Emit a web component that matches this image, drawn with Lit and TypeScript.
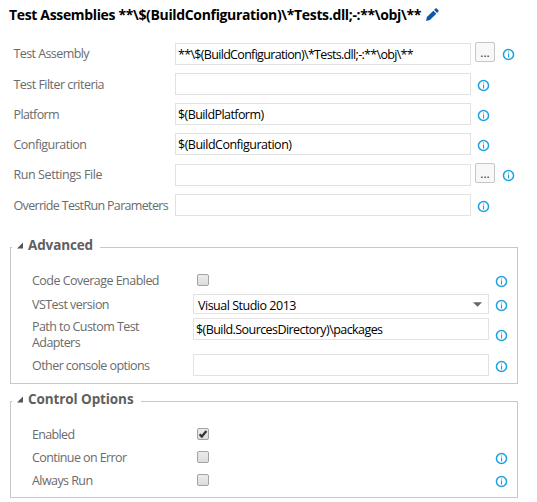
import { LitElement, html, css, svg, nothing } from "lit";
import { customElement, property } from "lit/decorators.js";

/** A single line of text, tracked so that it fills the given measure. */
@customElement("tracked-text")
class TrackedText extends LitElement {
  static styles = css`
    :host { display: block; white-space: pre; height: 16px; }
    span { display: inline-block; }
  `;
  @property() text = "";
  @property({ type: Number }) measure = 0;

  render() {
    return html`<span>${this.text}</span>`;
  }

  updated() {
    const span = this.renderRoot.querySelector("span") as HTMLElement;
    span.style.letterSpacing = "0px";
    const natural = span.getBoundingClientRect().width;
    span.style.letterSpacing = `${(this.measure - natural) / this.text.length}px`;
  }
}

@customElement("info-icon")
class InfoIcon extends LitElement {
  static styles = css`
    :host { display: block; width: 13px; height: 13px; }
    svg { display: block; }
  `;
  render() {
    return html`<svg width="13" height="13" viewBox="0 0 13 13">
      <circle cx="6.5" cy="6.5" r="5.05" fill="none" stroke="#1ba1e2" stroke-width="1.5" />
      <rect x="6" y="3.5" width="1" height="1" fill="#1ba1e2" />
      <rect x="6" y="5.5" width="1.1" height="4" fill="#1ba1e2" />
    </svg>`;
  }
}

type Line = [text: string, measure: number];

interface Field {
  label: Line[];
  kind: "text" | "select" | "check";
  value?: Line;
  checked?: boolean;
  browse?: boolean;
  info?: boolean;
  size?: string;
}

const main: Field[] = [
  { label: [["Test Assembly", 75.5]], kind: "text", value: ["**\\$(BuildConfiguration)\\*Tests.dll;-:**\\obj\\**", 235], browse: true, info: true },
  { label: [["Test Filter criteria", 90.5]], kind: "text", info: true },
  { label: [["Platform", 45.5]], kind: "text", value: ["$(BuildPlatform)", 85.5], info: true },
  { label: [["Configuration", 73]], kind: "text", value: ["$(BuildConfiguration)", 113.5], info: true, size: "last" },
  { label: [["Run Settings File", 88.5]], kind: "text", browse: true, info: true },
  { label: [["Override TestRun Parameters", 154.5]], kind: "text", info: true },
];

const advanced: Field[] = [
  { label: [["Code Coverage Enabled", 127]], kind: "check", info: true },
  { label: [["VSTest version", 77]], kind: "select", value: ["Visual Studio 2013", 98], info: true },
  { label: [["Path to Custom Test", 107], ["Adapters", 48]], kind: "text", value: ["$(Build.SourcesDirectory)\\packages", 186.5], info: true, size: "tall" },
  { label: [["Other console options", 117.5]], kind: "text", info: true },
];

const control: Field[] = [
  { label: [["Enabled", 42.5]], kind: "check", checked: true },
  { label: [["Continue on Error", 94.5]], kind: "check", info: true },
  { label: [["Always Run", 60.5]], kind: "check", info: true },
];

@customElement("app-root")
class AppRoot extends LitElement {
  static styles = css`
    :host {
      display: block;
      box-sizing: border-box;
      width: 537px;
      height: 502px;
      overflow: hidden;
      padding-top: 5px;
      background: #fff;
      color: #000;
      font: 12.5px/17px "Open Sans", "Noto Sans", sans-serif;
    }
    * { box-sizing: border-box; }
    .title {
      display: flex;
      height: 38px;
      padding-left: 9px;
      font-weight: 700;
      font-size: 14px;
      line-height: 20px;
    }
    .title svg { margin: 3px 0 0 5px; }
    .row { display: flex; align-items: flex-start; }
    .label { flex: none; color: #6b6b6b; }
    .box {
      flex: none;
      display: flex;
      width: 296px;
      height: 22px;
      padding: 2px 0 0 2px;
      border: 1px solid #e2e2e2;
    }
    .browse {
      width: 20px;
      height: 20px;
      margin: -1px 0 0 4px;
      padding: 0;
      border: 1px solid #c6c6c6;
      border-radius: 2px;
      background: #f8f8f8;
      color: #333;
      font: 12px/20px "Open Sans", sans-serif;
      text-align: center;
    }

    .main { height: 204px; padding-left: 13.5px; }
    .main .row { height: 30px; }
    .main .row.last { height: 31px; }
    .main .label { width: 161.5px; padding-top: 3px; }
    .main .row.has-browse .label { padding-top: 2px; }
    .main info-icon { margin: 6px 0 0 6px; }
    .main .has-browse info-icon { margin: 5px 0 0 7px; }

    .group {
      width: 508px;
      margin-left: 10px;
      border: 1px solid #c8c8c8;
      border-top: 0;
    }
    .group.advanced { height: 137px; }
    .group.control { height: 97px; margin-top: 17px; }
    .legend {
      display: flex;
      align-items: flex-start;
      height: 16px;
      margin: 0 -1px;
      color: #5f5f5f;
      font-size: 13.5px;
      line-height: 16px;
      font-weight: 700;
    }
    .legend::before { content: ""; width: 2px; height: 1px; background: #c8c8c8; }
    .legend::after { content: ""; flex: 1; height: 1px; background: #c8c8c8; }
    .legend svg { flex: none; margin: -5px 5px 0 5px; }
    .legend tracked-text { margin: -10px 7px 0 0; }

    .group .row { padding-left: 21px; }
    .group .label { width: 161px; }
    .group info-icon { margin-left: 6px; }
    .slot { flex: none; width: 296px; padding-left: 4px; }
    .check { display: block; }
    .select { height: 20px; padding: 2px 6px 0 4px; justify-content: space-between; }
    .select svg { margin-top: 5px; }

    .advanced .row { height: 24px; }
    .advanced .legend { margin-bottom: 9px; }
    .advanced .row .slot { padding-top: 2px; }
    .advanced .row info-icon { margin-top: 3px; }
    .advanced .row.select-row { height: 24px; margin-top: -2px; }
    .advanced .row.select-row .label { margin-top: 2px; }
    .advanced .row.select-row info-icon { margin-top: 5px; }
    .advanced .row.text-row .label { margin-top: 3px; }
    .advanced .row.text-row info-icon { margin-top: 6px; }
    .advanced .row.tall { height: 36px; }
    .advanced .row.tall .label { margin-top: 0; }
    .advanced .row.tall info-icon { margin-top: 11px; }

    .control .legend { margin-bottom: 9px; }
    .control .row { height: 23px; }
    .control .slot { padding-top: 2px; }
    .control info-icon { margin-top: 3px; }
  `;

  private check(on?: boolean) {
    return html`<svg class="check" width="12" height="12" viewBox="0 0 12 12">
      <defs><linearGradient id="face" x1="0" y1="0" x2="0" y2="1">
        <stop offset="0" stop-color="#ececec" /><stop offset="1" stop-color="#dcdcdc" />
      </linearGradient></defs>
      <rect x=".5" y=".5" width="11" height="11" rx="1.5" fill="url(#face)" stroke="#a3a3a3" />
      ${on ? svg`<path d="M2.6 6.2 L4.8 8.5 L9.4 3" fill="none" stroke="#333" stroke-width="2.2" />` : nothing}
    </svg>`;
  }

  private line([text, measure]: Line) {
    return html`<tracked-text .text=${text} .measure=${measure}></tracked-text>`;
  }

  private control(f: Field) {
    if (f.kind === "check") return html`<div class="slot">${this.check(f.checked)}</div>`;
    return html`<div class="box ${f.kind}">
      ${f.value ? this.line(f.value) : nothing}
      ${f.kind === "select"
        ? html`<svg width="9" height="5" viewBox="0 0 9 5"><path d="M0 .3H9L4.5 4.8Z" fill="#666" /></svg>`
        : nothing}
    </div>`;
  }

  private row(f: Field) {
    return html`<div class="row ${f.kind}-row ${f.size ?? ""} ${f.browse ? "has-browse" : ""}">
      <div class="label">${f.label.map((l) => this.line(l))}</div>
      ${this.control(f)}
      ${f.browse ? html`<button class="browse">...</button>` : nothing}
      ${f.info ? html`<info-icon></info-icon>` : nothing}
    </div>`;
  }

  private group(name: string, title: Line, fields: Field[]) {
    return html`<section class="group ${name}">
      <div class="legend">
        <svg width="6" height="7" viewBox="0 0 6 7"><path d="M6 .5V6.5H0Z" fill="#555" /></svg>
        ${this.line(title)}
      </div>
      ${fields.map((f) => this.row(f))}
    </section>`;
  }

  render() {
    return html`
      <div class="title">
        ${this.line(["Test Assemblies **\\$(BuildConfiguration)\\*Tests.dll;-:**\\obj\\**", 412])}
        <svg width="13" height="13" viewBox="0 0 13 13" fill="#0b58a6">
          <path d="M0 13 L.9 9.1 L7.3 2.7 L10.3 5.7 L3.9 12.1Z" />
          <path d="M8.1 1.9 L9.4 .6 Q10.1 0 10.8 .6 L12.4 2.2 Q13 2.9 12.4 3.6 L11.1 4.9Z" />
        </svg>
      </div>
      <div class="main">${main.map((f) => this.row(f))}</div>
      ${this.group("advanced", ["Advanced", 65], advanced)}
      ${this.group("control", ["Control Options", 105.5], control)}
    `;
  }
}
